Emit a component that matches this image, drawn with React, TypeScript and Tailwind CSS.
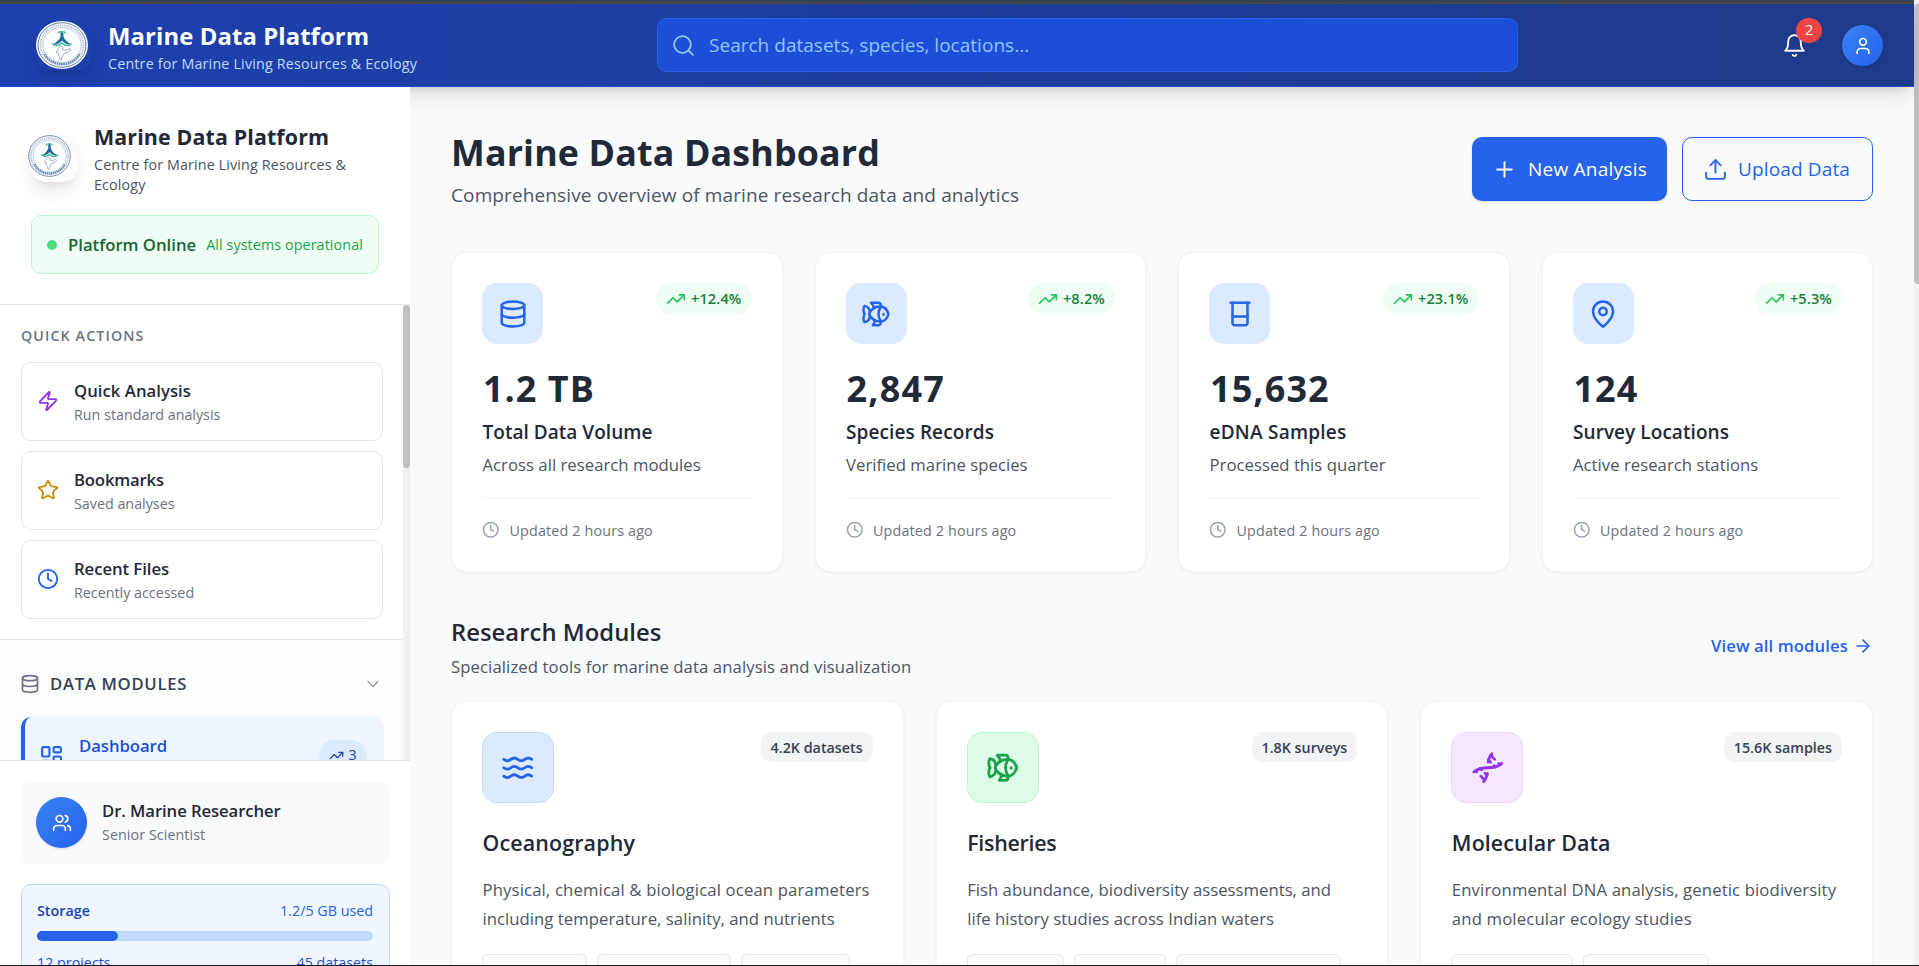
import React from "react";
import {
  ArrowRight,
  Beaker,
  ChevronDown,
  Clock,
  Database,
  Dna,
  Fish,
  LayoutDashboard,
  MapPin,
  Plus,
  Search,
  Star,
  TrendingUp,
  Upload,
  User,
  Users,
  Waves,
  Zap,
  type LucideIcon,
} from "lucide-react";

function BellIcon() {
  return (
    <svg width="25" height="25" viewBox="0 0 24 24" fill="none" stroke="currentColor" strokeWidth="1.800" strokeLinecap="round" strokeLinejoin="round">
      <path d="M6 8a6 6 0 0 1 12 0c0 7 3 9 3 9H3s3-2 3-9" />
      <path d="M10.3 21a1.94 1.94 0 0 0 3.4 0" />
    </svg>
  );
}

function Logo({ className }: { className: string }) {
  return (
    <svg className={className} viewBox="0 0 104 96" preserveAspectRatio="none" fill="none">
      <ellipse cx="52" cy="48" rx="52" ry="48" fill="#fdfefe" />
      <ellipse cx="52" cy="48" rx="48" ry="44.5" stroke="#6482ad" strokeWidth="2" />
      <ellipse cx="52" cy="48" rx="43" ry="39.5" stroke="#a9bbd2" strokeWidth="4" strokeDasharray="2.5 2" />
      <path d="M17 66c8 13 20 20 35 20s27-7 35-20" stroke="#5f80ac" strokeWidth="4.5" strokeDasharray="3 1.5" />
      <ellipse cx="52" cy="48" rx="38.5" ry="35" stroke="#8ea5c4" strokeWidth="1.2" />
      <path d="M44 25c2-5 13-5 15 0" stroke="#5fc4a4" strokeWidth="3.5" />
      <path d="M51.500 22c4 1 4 5 3 8 2 7 8 13 16 17-7 1-14-2-18.500-8-4.500 6-11.500 9-18.500 8 8-4 14-10 16-17-1-3-1-7 2-8Z" fill="#1c6a9c" />
      <path d="M32 45c7 7 13 5 19.500-1 6.500 6 12.500 8 20.500 1" stroke="#43b79a" strokeWidth="3" />
      <path d="m49 50 5 3-1 4 7 2 7-4 2 3-5 5-7 1-4 6-3 8-4-7-1-7-5-2 3-4 3-4Z" stroke="#8499ba" strokeWidth="1.600" />
    </svg>
  );
}

const quickActions: { icon: LucideIcon; color: string; title: string; sub: string; tracking: string }[] = [
  { icon: Zap, color: "text-[#9333ea]", title: "Quick Analysis", sub: "Run standard analysis", tracking: "tracking-[0.04px]" },
  { icon: Star, color: "text-[#ca8a04]", title: "Bookmarks", sub: "Saved analyses", tracking: "tracking-[-0.16px]" },
  { icon: Clock, color: "text-[#2563eb]", title: "Recent Files", sub: "Recently accessed", tracking: "tracking-[-0.05px]" },
];

const stats: { icon: LucideIcon; trend: string; value: string; label: string; desc: string; vt: string; lt: string }[] = [
  { icon: Database, trend: "+12.4%", value: "1.2 TB", label: "Total Data Volume", desc: "Across all research modules", vt: "tracking-[1px]", lt: "tracking-[0.03px]" },
  { icon: Fish, trend: "+8.2%", value: "2,847", label: "Species Records", desc: "Verified marine species", vt: "tracking-[1.2px]", lt: "tracking-[0.1px]" },
  { icon: Beaker, trend: "+23.1%", value: "15,632", label: "eDNA Samples", desc: "Processed this quarter", vt: "tracking-[1.1px]", lt: "tracking-[0.24px]" },
  { icon: MapPin, trend: "+5.3%", value: "124", label: "Survey Locations", desc: "Active research stations", vt: "tracking-[1px]", lt: "tracking-[0.06px]" },
];

const modules: {
  icon: LucideIcon;
  box: string;
  badge: string;
  title: string;
  tt: string;
  lines: { text: string; tracking: string }[];
  tags: string[];
}[] = [
  {
    icon: Waves,
    box: "bg-[#dbeafe] border-[#bfdbfe] text-[#2563eb]",
    badge: "4.2K datasets",
    title: "Oceanography",
    tt: "tracking-[0.15px]",
    lines: [
      { text: "Physical, chemical & biological ocean parameters", tracking: "tracking-[0.15px]" },
      { text: "including temperature, salinity, and nutrients", tracking: "tracking-[0.04px]" },
    ],
    tags: ["w-[105px]", "w-[134px]", "w-[109px]"],
  },
  {
    icon: Fish,
    box: "bg-[#dcfce7] border-[#bbf7d0] text-[#16a34a]",
    badge: "1.8K surveys",
    title: "Fisheries",
    tt: "tracking-[-0.25px]",
    lines: [
      { text: "Fish abundance, biodiversity assessments, and", tracking: "tracking-[0.02px]" },
      { text: "life history studies across Indian waters", tracking: "tracking-[0.03px]" },
    ],
    tags: ["w-[97px]", "w-[92px]", "w-[165px]"],
  },
  {
    icon: Dna,
    box: "bg-[#f3e8ff] border-[#e9d5ff] text-[#9333ea]",
    badge: "15.6K samples",
    title: "Molecular Data",
    tt: "tracking-[0.1px]",
    lines: [
      { text: "Environmental DNA analysis, genetic biodiversity", tracking: "tracking-[0.13px]" },
      { text: "and molecular ecology studies", tracking: "tracking-[0.16px]" },
    ],
    tags: ["w-[122px]", "w-[126px]"],
  },
];

function Header() {
  return (
    <header className="relative z-10 flex h-[83px] shrink-0 items-start border-b border-[#1d4ed8] bg-linear-to-r from-[#1e40af] to-[#1e3a8a] shadow-[0_12.5px_19px_-4px_rgba(0,0,0,0.12),0_5px_8px_-5px_rgba(0,0,0,0.12)]">
      <div className="ml-9 mt-[17px] flex h-[49px] w-[56px] shrink-0 justify-start rounded-[14px] shadow-[0_12px_19px_-4px_rgba(0,0,0,0.12),0_5px_8px_-5px_rgba(0,0,0,0.12)]">
        <Logo className="h-[48px] w-[52px]" />
      </div>
      <div className="ml-[16px] w-[549px] shrink-0 pt-[17px]">
        <h1 className="h-[30px] text-[23.8px] font-bold leading-[30px] tracking-[0.13px] text-white">Marine Data Platform</h1>
        <p className="mt-[3px] h-5 text-[14.3px] leading-5 tracking-[0.18px] text-[#bfdbfe]">Centre for Marine Living Resources &amp; Ecology</p>
      </div>
      <div className="mt-[14px] flex h-[54px] w-[861px] shrink-0 items-center rounded-[10px] border border-[#2563eb] bg-[#1d4ed8] pl-[13px] text-[#93c5fd]">
        <Search size={25} strokeWidth={1.75} />
        <span className="ml-[13px] text-[19px] leading-[28px] tracking-[0.02px]">Search datasets, species, locations...</span>
      </div>
      <div className="ml-auto mr-[31px] mt-[21px] flex items-center">
        <div className="relative text-white">
          <BellIcon />
          <span className="absolute left-[14px] top-[-15px] flex h-[25px] w-[26px] items-center justify-center rounded-full bg-[#ef4444] text-[14.3px] leading-none">2</span>
        </div>
        <div className="ml-[35px] flex size-[41px] items-center justify-center rounded-full bg-linear-to-br from-[#3b82f6] to-[#2563eb] text-white shadow-sm">
          <User size={20} />
        </div>
      </div>
    </header>
  );
}

function Sidebar() {
  return (
    <aside className="relative z-20 flex w-[410px] shrink-0 flex-col bg-white">
      <div className="h-[218px] shrink-0 border-b border-[#e5e7eb] pt-[35px]">
        <div className="flex items-start">
          <div className="ml-[30px] mt-[12px] size-[48px] shrink-0 rounded-[15px] bg-[#fcfcfd] shadow-[0_12px_19px_-4px_rgba(0,0,0,0.1),0_5px_8px_-5px_rgba(0,0,0,0.1)]">
            <Logo className="-ml-[3px] h-[44px] w-[45px]" />
          </div>
          <div className="ml-[16px]">
            <h2 className="h-[30px] text-[21.4px] font-bold leading-[30px] tracking-[0.13px] text-[#1f2937]">Marine Data Platform</h2>
            <p className="mt-[3px] text-[14.3px] leading-5 tracking-[0.14px] text-[#4b5563]">
              Centre for Marine Living Resources &amp;
              <br />
              Ecology
            </p>
          </div>
        </div>
        <div className="ml-[31px] mt-[20px] flex h-[59px] w-[348px] items-center rounded-[10px] border border-[#bbf7d0] bg-[#f0fdf4] pl-[15px] whitespace-nowrap">
          <span className="size-[10px] rounded-full bg-[#4ade80]" />
          <span className="ml-[11px] text-[16.7px] font-semibold leading-6 text-[#166534]">Platform Online</span>
          <span className="ml-[10px] text-[14.3px] leading-6 tracking-[0.1px] text-[#16a34a]">All systems operational</span>
        </div>
      </div>

      <div className="flex h-[455px] shrink-0 overflow-hidden">
        <div className="w-[403px] shrink-0">
          <section className="h-[335px] border-b border-[#e5e7eb] pl-[21px] pr-5 pt-[21px]">
            <h3 className="h-5 text-[14.3px] font-semibold leading-5 tracking-[1.08px] text-[#6b7280]">QUICK ACTIONS</h3>
            <div className="mt-4 flex flex-col gap-[10px]">
              {quickActions.map(({ icon: Icon, color, title, sub, tracking }) => (
                <div key={title} className="flex h-[79px] items-center rounded-[10px] border border-[#e5e7eb] bg-white pl-[15px]">
                  <Icon size={22} className={`mb-[2px] ${color}`} />
                  <div className="ml-[15px] pt-[2px]">
                    <div className={`h-6 text-[16.7px] font-semibold leading-6 text-[#1f2937] ${tracking}`}>{title}</div>
                    <div className="h-6 text-[14.3px] leading-6 text-[#6b7280]">{sub}</div>
                  </div>
                </div>
              ))}
            </div>
          </section>
          <section className="h-[200px] bg-[#fcfdfd] pl-[20px] pr-5 pt-[32px]">
            <div className="flex h-6 items-center">
              <Database size={20} className="mb-px text-[#6b7280]" />
              <span className="ml-[10px] text-[16.7px] font-semibold leading-6 tracking-[0.69px] text-[#374151]">DATA MODULES</span>
              <ChevronDown size={20} className="ml-auto text-[#9ca3af]" />
            </div>
            <div className="ml-px mt-[21px] flex h-[79px] items-start rounded-[10px] border-l-4 border-[#2563eb] bg-[#eff6ff] pl-[14px] shadow-sm">
              <LayoutDashboard size={25} className="mt-[27px] text-[#2563eb]" />
              <div className="ml-[15px] pt-[17px]">
                <div className="h-6 text-[16.7px] font-semibold leading-6 tracking-[-0.05px] text-[#1d4ed8]">Dashboard</div>
                <div className="h-6 text-[14.3px] leading-6 text-[#3b82f6]" />
              </div>
              <div className="ml-auto mr-[16px] mt-[23px] flex h-[31px] w-[48px] items-center justify-center rounded-full bg-[#dbeafe] text-[#1e40af]">
                <TrendingUp size={15} />
                <span className="ml-1 text-[14.3px] font-medium leading-none">3</span>
              </div>
            </div>
          </section>
        </div>
        <div className="w-[7px] shrink-0 bg-[#f1f1f1]">
          <div className="h-[163px] rounded-full bg-[#c1c1c1]" />
        </div>
      </div>

      <div className="shrink-0 border-t border-[#e5e7eb] bg-white pl-[21px] pr-5 pt-[21px]">
        <div className="flex h-[82px] items-center rounded-[10px] bg-[#f9fafb] pl-[15px]">
          <div className="mb-px flex size-[51px] items-center justify-center rounded-full bg-linear-to-br from-[#3b82f6] to-[#2563eb] text-white shadow-sm">
            <Users size={20} />
          </div>
          <div className="ml-[15px]">
            <div className="h-6 text-[16.7px] font-semibold leading-6 tracking-[-0.08px] text-[#1f2937]">Dr. Marine Researcher</div>
            <div className="h-6 text-[14.3px] leading-6 tracking-[0.07px] text-[#6b7280]">Senior Scientist</div>
          </div>
        </div>
        <div className="mt-5 h-[120px] rounded-[10px] border border-[#bfdbfe] bg-[#eff6ff] px-[15px] pr-[16px] pt-[16px] text-[14.3px]">
          <div className="flex h-5 justify-between leading-5">
            <span className="font-semibold text-[#1e40af]">Storage</span>
            <span className="text-[#2563eb]">1.2/5 GB used</span>
          </div>
          <div className="mt-[10px] h-[10px] rounded-full bg-[#bfdbfe]">
            <div className="h-full w-[24%] rounded-full bg-[#2563eb]" />
          </div>
          <div className="mt-[12px] flex h-5 justify-between leading-5 text-[#1d4ed8]">
            <span>12 projects</span>
            <span>45 datasets</span>
          </div>
        </div>
      </div>
    </aside>
  );
}

function StatCard({ icon: Icon, trend, value, label, desc, vt, lt }: (typeof stats)[number]) {
  return (
    <div className="h-[320px] rounded-[15px] border border-[#f3f4f6] bg-white p-[30px] shadow-[0_1px_3px_rgba(0,0,0,0.06)]">
      <div className="flex items-start justify-between">
        <div className="flex size-[61px] items-center justify-center rounded-[15px] bg-[#dbeafe] text-[#2563eb]">
          <Icon size={30} />
        </div>
        <div className="flex h-[31px] items-center rounded-full bg-[#f0fdf4] px-[10px]">
          <TrendingUp size={20} className="text-[#22c55e]" />
          <span className="ml-[5px] text-[14.5px] font-semibold leading-5 tracking-[0.15px] text-[#15803d]">{trend}</span>
        </div>
      </div>
      <div className={`ml-px mt-[22px] h-[46px] text-[36px] font-bold leading-[46px] text-[#1f2937] ${vt}`}>{value}</div>
      <div className={`ml-[0.5px] mt-[6px] h-[28px] text-[19px] font-semibold leading-[28px] text-[#1f2937] ${lt}`}>{label}</div>
      <div className="ml-[0.5px] mt-[7px] h-6 text-[16.7px] leading-6 tracking-[0.03px] text-[#4b5563]">{desc}</div>
      <div className="mt-[21px] flex items-center border-t border-[#f3f4f6] pt-[22px]">
        <Clock size={17.5} className="mb-[3px] text-[#9ca3af]" />
        <span className="ml-[10px] text-[14.3px] leading-5 tracking-[0.17px] text-[#6b7280]">Updated 2 hours ago</span>
      </div>
    </div>
  );
}

function ModuleCard({ icon: Icon, box, badge, title, tt, lines, tags }: (typeof modules)[number]) {
  return (
    <div className="h-[400px] rounded-[15px] border border-[#f3f4f6] bg-white p-[30px] shadow-[0_1px_3px_rgba(0,0,0,0.06)]">
      <div className="flex items-start justify-between">
        <div className={`flex h-[71px] w-[72px] items-center justify-center rounded-[15px] border ${box}`}>
          <Icon size={33.5} />
        </div>
        <span className="h-[30px] rounded-[10px] bg-[#f3f4f6] px-[10px] text-[14.3px] font-semibold leading-[31px] text-[#374151]">{badge}</span>
      </div>
      <h3 className={`ml-[0.5px] mt-[25px] h-[30px] text-[21.4px] font-semibold leading-[30px] text-[#1f2937] ${tt}`}>{title}</h3>
      <p className="ml-[0.5px] mt-[17px] text-[16.7px] leading-[29px] whitespace-nowrap text-[#4b5563]">
        {lines.map((l) => (
          <span key={l.text} className={`block ${l.tracking}`}>
            {l.text}
          </span>
        ))}
      </p>
      <div className="mt-[21px] flex gap-[10px]">
        {tags.map((w) => (
          <span key={w} className={`h-[30px] rounded-[5px] border border-[#e5e7eb] bg-[#f9fafb] ${w}`} />
        ))}
      </div>
    </div>
  );
}

export default function App() {
  return (
    <div className="relative flex h-[966px] w-[1919px] overflow-hidden bg-[#f9fafb] font-['Open_Sans','Noto_Sans',sans-serif]">
      <div className="flex w-[1914px] shrink-0 flex-col">
        <div className="h-[4px] shrink-0 border-b-2 border-[#474747] bg-[#36424e]" />
        <Header />
        <div className="flex min-h-0 flex-1">
          <Sidebar />
          <main className="w-[1504px] shrink-0 overflow-hidden px-[41px] pt-[43px]">
            <div className="flex items-start justify-between">
              <div>
                <h1 className="h-[44px] text-[35.8px] font-bold leading-[44px] tracking-[0.15px] text-[#1f2937]">Marine Data Dashboard</h1>
                <p className="mt-[7px] h-[28px] text-[19px] leading-[28px] tracking-[0.12px] text-[#4b5563]">
                  Comprehensive overview of marine research data and analytics
                </p>
              </div>
              <div className="mt-[7px] flex gap-[15px] text-[19px]">
                <button className="flex h-[64px] w-[195px] items-center rounded-[10px] bg-[#2563eb] pl-[20px] tracking-[0.24px] whitespace-nowrap text-white shadow-sm">
                  <Plus size={25} strokeWidth={1.8} />
                  <span className="ml-[11px] pt-px">New Analysis</span>
                </button>
                <button className="flex h-[64px] w-[191px] items-center rounded-[10px] border border-[#2563eb] pl-[20px] tracking-[0.14px] whitespace-nowrap text-[#2563eb]">
                  <Upload size={25} strokeWidth={1.8} />
                  <span className="ml-[10px] pt-px">Upload Data</span>
                </button>
              </div>
            </div>

            <div className="mt-[43px] grid grid-cols-4 gap-8">
              {stats.map((s) => (
                <StatCard key={s.label} {...s} />
              ))}
            </div>

            <div className="mt-[44px] flex items-center justify-between">
              <div>
                <h2 className="h-[32px] text-[23.8px] font-semibold leading-[32px] tracking-[0.04px] text-[#1f2937]">Research Modules</h2>
                <p className="mt-[7px] h-6 text-[16.7px] leading-6 tracking-[0.1px] text-[#4b5563]">
                  Specialized tools for marine data analysis and visualization
                </p>
              </div>
              <a className="mb-[3px] flex items-center text-[16.7px] font-semibold leading-6 tracking-[0.1px] text-[#2563eb]">
                View all modules
                <ArrowRight size={20} className="ml-[5px]" />
              </a>
            </div>

            <div className="mt-[22px] grid grid-cols-3 gap-8">
              {modules.map((m) => (
                <ModuleCard key={m.title} {...m} />
              ))}
            </div>
          </main>
        </div>
      </div>
      <div className="w-[5px] shrink-0 bg-[#f1f1f1] pt-[4px]">
        <div className="h-[280px] rounded-bl-[4px] rounded-tl-[4px] bg-[#c1c1c1]" />
      </div>
      <div className="absolute bottom-0 left-0 z-30 h-px w-full bg-[#1a1a1a]" />
    </div>
  );
}
